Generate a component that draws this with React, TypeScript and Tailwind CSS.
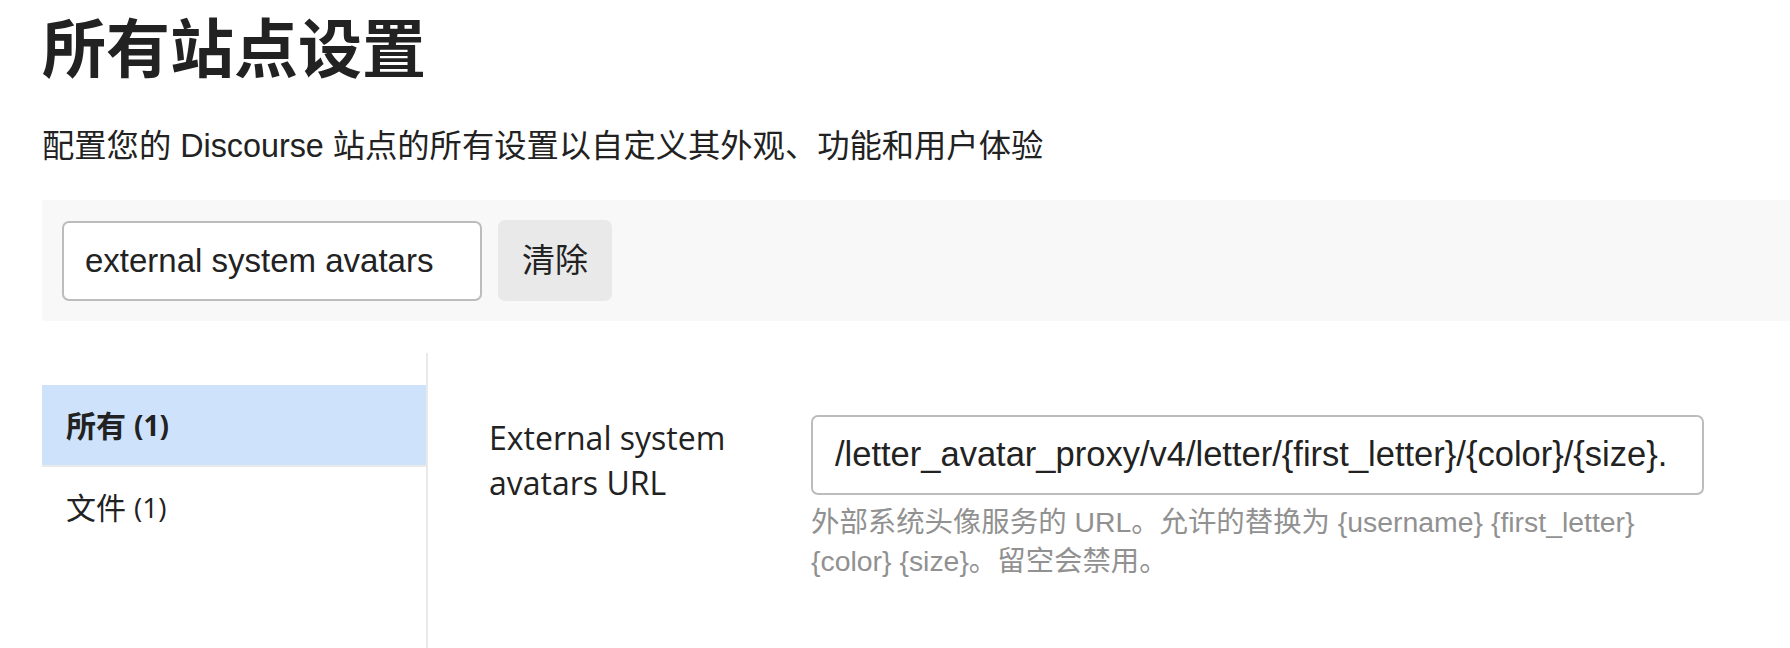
import React from "react";

const SANS = "font-['Liberation_Sans','Noto_Sans_CJK_SC',sans-serif]";
const OPEN = "font-['Open_Sans','Noto_Sans_CJK_SC',sans-serif]";

const CATEGORIES = [
  { name: "所有", count: 1, active: true },
  { name: "文件", count: 1, active: false },
];

const SettingRow = () => (
  <div className="flex items-start pt-[62px]">
    <div className={`${OPEN} w-[383px] shrink-0 pl-[61px] pr-[40px] text-[32px] leading-[45px] text-[#222]`}>
      External system avatars URL
    </div>
    <div className="flex w-[893px] flex-col">
      <div
        className={`${SANS} flex h-[80px] items-center overflow-hidden whitespace-nowrap rounded-[7px] border-2 border-[#bcbcbc] bg-white pl-[22px] text-[34.5px] text-[#222]`}
      >
        /letter_avatar_proxy/v4/letter/{"{first_letter}"}/{"{color}"}/{"{size}"}.
      </div>
      <p className={`${SANS} mt-[8px] text-[28.4px] leading-[39px] text-[#919191]`}>
        外部系统头像服务的 URL。允许的替换为 {"{username}"} {"{first_letter}"} {"{color}"} {"{size}"}。留空会禁用。
      </p>
    </div>
  </div>
);

export default function App() {
  return (
    <div className={`${SANS} h-[648px] w-full overflow-hidden bg-white pl-[42px] text-[#222]`}>
      <h1 className="mt-[18px] text-[64px] font-bold leading-[64px]">所有站点设置</h1>
      <p className="mt-[39px] text-[32.3px] leading-[50px]">
        配置您的 Discourse 站点的所有设置以自定义其外观、功能和用户体验
      </p>

      <div className="mt-[29px] flex h-[121px] items-center gap-[16px] bg-[#f8f8f8] px-[20px]">
        <div className="flex h-[80px] w-[420px] items-center rounded-[7px] border-2 border-[#bcbcbc] bg-white pl-[21px] text-[33px]">
          external system avatars
        </div>
        <button className="h-[81px] rounded-[7px] bg-[#e9e9e9] px-[24px] text-[33px] text-[#222]">
          清除
        </button>
      </div>

      <div className="mt-[32px] flex h-[400px]">
        <ul className={`${OPEN} w-[384px] shrink-0 pt-[32px]`}>
          {CATEGORIES.map((c) => (
            <li
              key={c.name}
              className={
                c.active
                  ? "flex h-[82px] items-center border-b-2 border-[#e9e9e9] bg-[#cfe2fb] pl-[24px] text-[30px] font-bold"
                  : "flex h-[80px] items-center pl-[24px] text-[30px]"
              }
            >
              {c.name} <span className="ml-[8px] text-[28px]">({c.count})</span>
            </li>
          ))}
        </ul>
        <div className="flex-1 border-l-2 border-[#e9e9e9]">
          <SettingRow />
        </div>
      </div>
    </div>
  );
}
